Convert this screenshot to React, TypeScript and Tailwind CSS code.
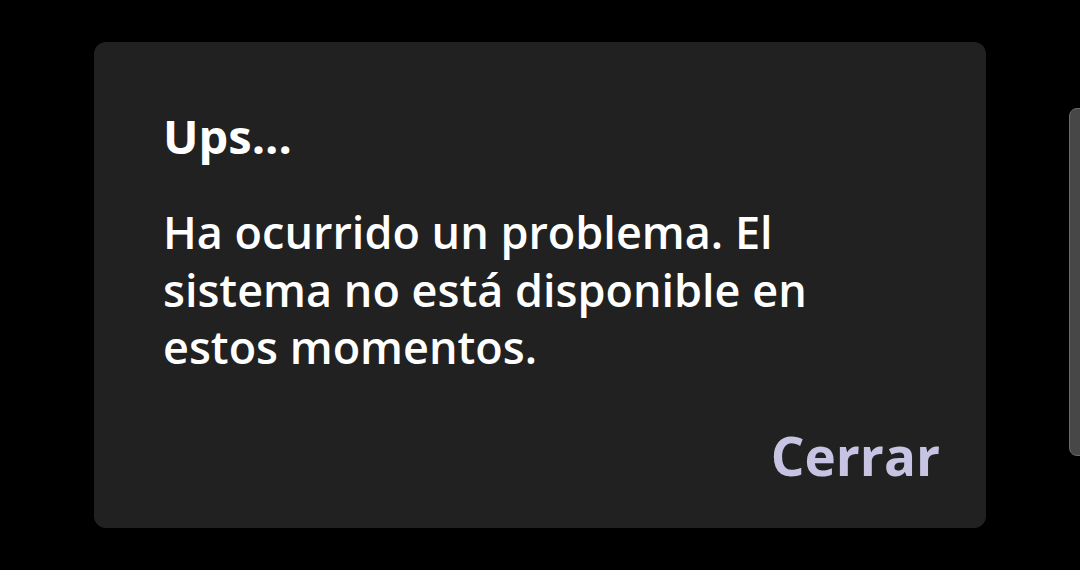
export default function App() {
  return (
    <div className="relative h-[570px] w-[1080px] overflow-hidden bg-black" style={{ fontFamily: '"Open Sans", "Noto Sans", sans-serif' }}>
      <div className="ml-[94px] mt-[42px] flex h-[486px] w-[892px] flex-col rounded-[12px] bg-[#212121] pl-[69px] pr-[46px] pt-[64px]">
        <h1 className="text-[47px] font-bold leading-[60px] text-white">Ups...</h1>
        <p className="mt-[37px] w-[680px] text-[45px] font-semibold leading-[57.5px] text-white">
          Ha ocurrido un problema. El sistema no está disponible en estos momentos.
        </p>
        <div className="mt-auto mb-[40px] flex justify-end">
          <button className="text-[53px] font-bold leading-[64px] text-[#c6c4e2]">Cerrar</button>
        </div>
      </div>
      <div className="absolute left-[1069px] top-[108px] h-[348px] w-[20px] rounded-[8px] border border-[#6a6a6a] bg-[#474747]" />
    </div>
  );
}
